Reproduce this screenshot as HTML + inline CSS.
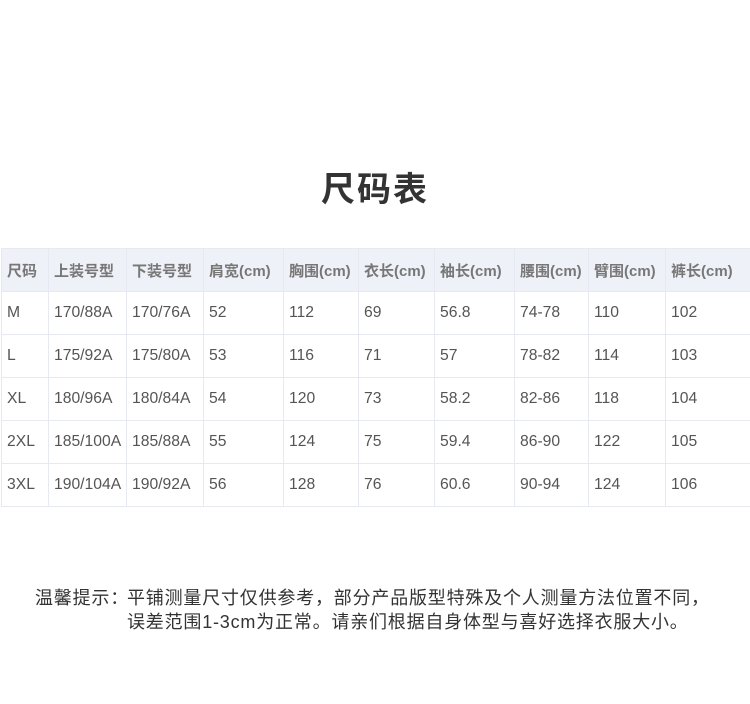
<!DOCTYPE html>
<html><head><meta charset="utf-8"><style>
body{margin:0;width:750px;height:704px;background:#fff;font-family:"Liberation Sans","Noto Sans CJK SC",sans-serif;position:relative;overflow:hidden}
h1{position:absolute;top:168px;left:0;width:750px;text-align:center;margin:0;font-size:34px;font-weight:bold;color:#333;letter-spacing:2px;line-height:44px}
table{position:absolute;top:248px;left:1px;border-collapse:collapse;table-layout:fixed;width:750px}
td{border:1px solid #e6e9f2;height:42px;padding:0 0 0 5px;font-size:15.7px;color:#555;white-space:nowrap;overflow:hidden}
tr.h td{background:#eef1f8;color:#777;font-weight:bold;height:42px;font-size:15px}
.t{position:absolute;left:35px;font-size:18px;letter-spacing:0.8px;color:#333;line-height:24px;white-space:nowrap}
</style></head><body>
<h1>尺码表</h1>
<table>
<colgroup><col style="width:47px"><col style="width:78px"><col style="width:77px"><col style="width:80px"><col style="width:75px"><col style="width:76px"><col style="width:80px"><col style="width:74px"><col style="width:77px"><col style="width:86px"></colgroup>
<tr class="h"><td>尺码</td><td>上装号型</td><td>下装号型</td><td>肩宽(cm)</td><td>胸围(cm)</td><td>衣长(cm)</td><td>袖长(cm)</td><td>腰围(cm)</td><td>臂围(cm)</td><td>裤长(cm)</td></tr>
<tr><td>M</td><td>170/88A</td><td>170/76A</td><td>52</td><td>112</td><td>69</td><td>56.8</td><td>74-78</td><td>110</td><td>102</td></tr>
<tr><td>L</td><td>175/92A</td><td>175/80A</td><td>53</td><td>116</td><td>71</td><td>57</td><td>78-82</td><td>114</td><td>103</td></tr>
<tr><td>XL</td><td>180/96A</td><td>180/84A</td><td>54</td><td>120</td><td>73</td><td>58.2</td><td>82-86</td><td>118</td><td>104</td></tr>
<tr><td>2XL</td><td>185/100A</td><td>185/88A</td><td>55</td><td>124</td><td>75</td><td>59.4</td><td>86-90</td><td>122</td><td>105</td></tr>
<tr><td>3XL</td><td>190/104A</td><td>190/92A</td><td>56</td><td>128</td><td>76</td><td>60.6</td><td>90-94</td><td>124</td><td>106</td></tr>
</table>
<div class="t" style="top:586px">温馨提示：</div>
<div class="t" style="top:586px;left:127px">平铺测量尺寸仅供参考，部分产品版型特殊及个人测量方法位置不同，</div>
<div class="t" style="top:610px;left:127px">误差范围1-3cm为正常。请亲们根据自身体型与喜好选择衣服大小。</div>
</body></html>
